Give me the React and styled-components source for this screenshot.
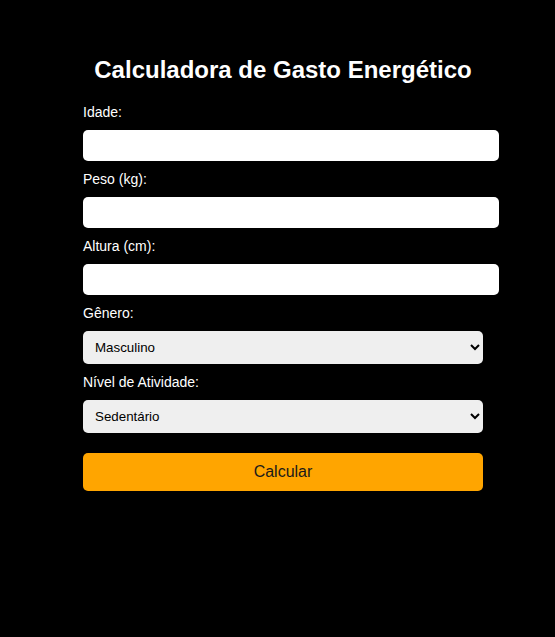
import styled, { createGlobalStyle } from 'styled-components';

const GlobalStyle = createGlobalStyle`
    html, body {
        margin: 0;
        padding: 0;
        background: #000000;
    }

    body {
        font-family: 'Liberation Sans', Arial, sans-serif;
        color: #FFFFFF;
    }
`;

export default function App () {

    return (
        <>
            <GlobalStyle />
            <Page>
                <Container>
                    <Title>Calculadora de Gasto Energético</Title>
                    <Label htmlFor='idade'>Idade:</Label>
                    <Input id='idade' type='number' />
                    <Label htmlFor='peso'>Peso (kg):</Label>
                    <Input id='peso' type='number' />
                    <Label htmlFor='altura'>Altura (cm):</Label>
                    <Input id='altura' type='number' />
                    <Label htmlFor='genero'>Gênero:</Label>
                    <Select id='genero' defaultValue='masculino'>
                        <option value='masculino'>Masculino</option>
                        <option value='feminino'>Feminino</option>
                    </Select>
                    <Label htmlFor='atividade'>Nível de Atividade:</Label>
                    <Select id='atividade' defaultValue='sedentario'>
                        <option value='sedentario'>Sedentário</option>
                        <option value='leve'>Levemente ativo</option>
                        <option value='moderado'>Moderadamente ativo</option>
                        <option value='muito'>Muito ativo</option>
                    </Select>
                    <Button>Calcular</Button>
                </Container>
            </Page>
        </>
    );

}

const Page = styled.div`

    min-height: 637px;
    box-sizing: border-box;
    padding: 56px 0 0 11px;
    background: #000000;

`;

const Container = styled.div`

    width: 400px;
    margin: 0 auto;
    display: flex;
    flex-direction: column;

`;

const Title = styled.h2`

    margin: 0 0 20px 0;
    font-size: 24px;
    line-height: 28px;
    font-weight: bold;
    text-align: center;
    color: #FFFFFF;
    white-space: nowrap;

`;

const Label = styled.label`

    display: block;
    font-size: 14px;
    line-height: 16px;
    margin-bottom: 10px;
    color: #FFFFFF;

`;

const Input = styled.input`

    width: 400px;
    height: 15px;
    padding: 8px;
    margin: 0 0 10px 0;
    border: none;
    border-radius: 5px;
    background: #FFFFFF;
    font-family: 'Liberation Sans', Arial, sans-serif;
    font-size: 13.33px;
    box-sizing: content-box;
    outline: none;

`;

const Select = styled.select`

    width: 400px;
    height: 33px;
    padding: 0 8px;
    margin: 0 0 10px 0;
    border: none;
    border-radius: 5px;
    background: #EFEFEF;
    color: #000000;
    font-family: 'Liberation Sans', Arial, sans-serif;
    font-size: 13.33px;
    box-sizing: border-box;
    outline: none;

`;

const Button = styled.button`

    width: 400px;
    height: 38px;
    margin-top: 10px;
    border: none;
    border-radius: 5px;
    background: #FFA500;
    color: #1A1A1A;
    font-family: 'Liberation Sans', Arial, sans-serif;
    font-size: 16px;
    cursor: pointer;

`;
